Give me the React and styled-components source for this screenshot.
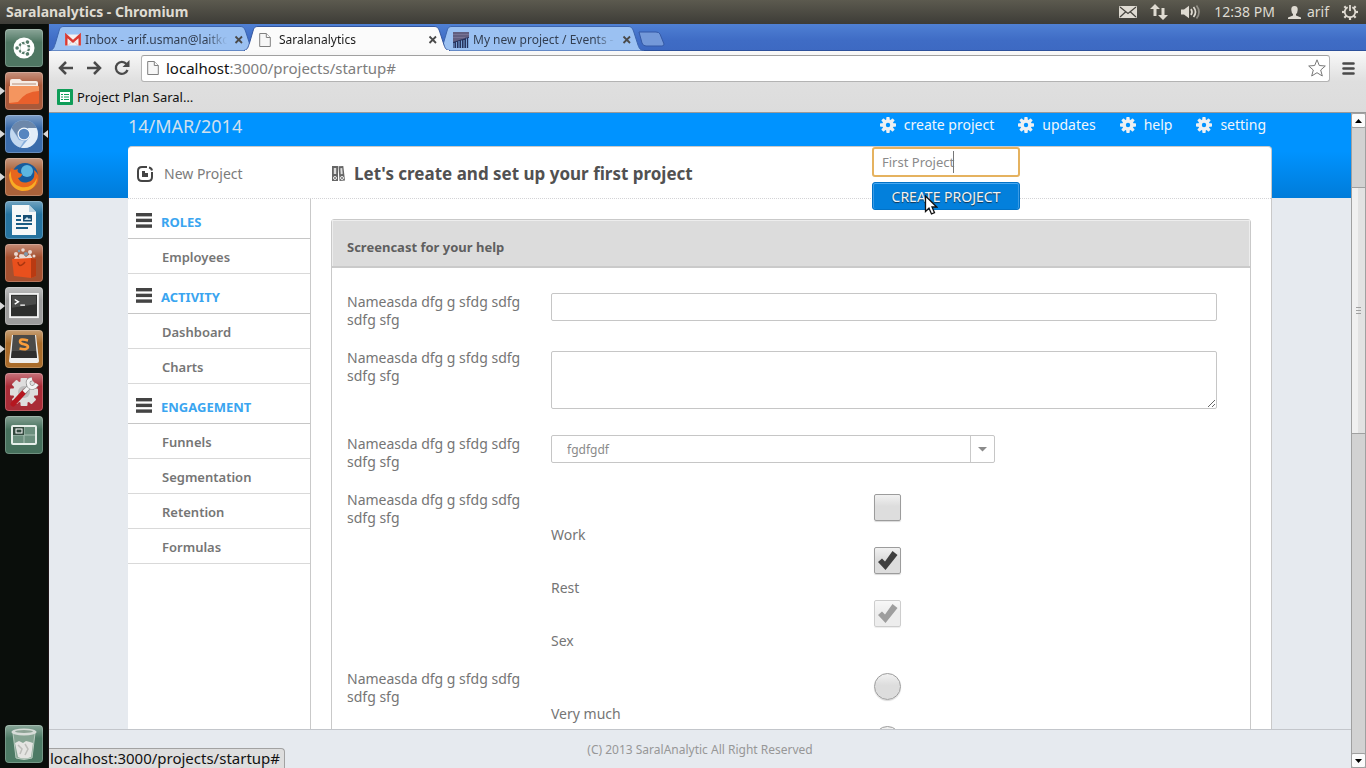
import React from "react";
import styled, { createGlobalStyle, css } from "styled-components";

const chromeFont = '"Noto Sans", "Open Sans", sans-serif';
const pageFont = '"Noto Sans", "Open Sans", sans-serif';

const GlobalStyle = createGlobalStyle`
  *, *::before, *::after { box-sizing: border-box; }
  body { margin: 0; font-family: ${pageFont}; background: #e6eaef; }
  button, input, select, textarea { font-family: inherit; margin: 0; }
  button { border: 0; padding: 0; background: none; }
  ul { list-style: none; margin: 0; padding: 0; }
  h1, h2, h3, p { margin: 0; }
  svg { display: block; flex: none; }
`;

/* ---------- desktop ---------- */

const Desktop = styled.div`
  height: 100vh;
  display: flex;
  flex-direction: column;
  overflow: hidden;
`;

const SystemBar = styled.header`
  flex: none;
  height: 24px;
  padding: 0 8px 0 6px;
  display: flex;
  align-items: center;
  justify-content: space-between;
  background: linear-gradient(#5c5a4f, #3d3c37);
  color: #dfdbd2;
  font: 14px/24px ${chromeFont};
`;

const WindowTitle = styled.h1`
  font-size: 14px;
  font-weight: 700;
`;

const Indicators = styled.div`
  display: flex;
  align-items: center;
  gap: 13px;
`;

const Indicator = styled.span`
  display: flex;
  align-items: center;
  gap: 6px;
`;

const Workspace = styled.div`
  flex: 1;
  min-height: 0;
  display: flex;
`;

const Launcher = styled.nav`
  flex: none;
  width: 49px;
  padding: 5px 5px 5px;
  display: flex;
  flex-direction: column;
  gap: 5px;
  background: #0a0e0b;
  border-right: 1px solid #1f1417;
`;

const Tile = styled.button`
  position: relative;
  flex: none;
  width: 38px;
  height: 38px;
  border-radius: 4px;
  display: grid;
  place-items: center;
  background: linear-gradient(rgba(255, 255, 255, 0.35), rgba(255, 255, 255, 0) 35%), ${(p) => p.$color};
  box-shadow: inset 0 0 0 1px rgba(255, 255, 255, 0.22);
  ${(p) => p.$last && css`margin-top: auto;`}
  ${(p) =>
    p.$running &&
    css`
      &::before {
        content: "";
        position: absolute;
        left: -5px;
        top: 15px;
        border: 4px solid transparent;
        border-left: 5px solid #d8d8d8;
        border-right: 0;
      }
    `}
  ${(p) =>
    p.$active &&
    css`
      &::after {
        content: "";
        position: absolute;
        right: -5px;
        top: 15px;
        border: 4px solid transparent;
        border-right: 5px solid #d8d8d8;
        border-left: 0;
      }
    `}
`;

/* ---------- browser ---------- */

const Browser = styled.div`
  flex: 1;
  min-width: 0;
  display: flex;
  flex-direction: column;
`;

const TabStrip = styled.div`
  flex: none;
  height: 27px;
  padding: 2px 0 0 1px;
  display: flex;
  background: linear-gradient(#4f80d4, #3f6cc5 60%, #3d69c2);
  font: 12px/24px ${chromeFont};
  box-shadow: inset 0 -1px #2c509b;
`;

const Tab = styled.div`
  position: relative;
  z-index: ${(p) => (p.$active ? 2 : 1)};
  width: 206px;
  height: 25px;
  padding: 2px 8px 0 15px;
  display: flex;
  align-items: center;
  gap: 4px;
  color: ${(p) => (p.$active ? "#1b1b1b" : "#333f52")};
  & + & { margin-left: -12px; }
`;

const TabShape = styled.svg`
  position: absolute;
  inset: 0;
  z-index: -1;
`;

const Favicon = styled.span`
  flex: none;
  width: 16px;
`;

const TabLabel = styled.span`
  flex: 1;
  min-width: 0;
  white-space: nowrap;
  mask-image: linear-gradient(to right, #000 84%, transparent 98%);
`;

const TabClose = styled.button`
  flex: none;
  width: 14px;
  height: 10px;
`;

const NewTab = styled.button`
  align-self: center;
  margin-left: -6px;
  z-index: 2;
`;

const Toolbar = styled.div`
  flex: none;
  height: 62px;
  background: linear-gradient(#f9f9f9, #dfdfdf 50%, #dcdcdc);
  border-bottom: 1px solid #999;
`;

const AddressRow = styled.div`
  height: 34px;
  padding: 3px 11px 3px 9px;
  display: flex;
  align-items: center;
  gap: 12px;
`;

const IconButton = styled.button`
  width: 16px;
  height: 16px;
`;

const AddressBox = styled.div`
  flex: 1;
  height: 27px;
  margin-left: -1px;
  padding: 0 3px 0 5px;
  display: flex;
  align-items: center;
  gap: 7px;
  background: #fff;
  border: 1px solid #b3b3b3;
  border-top-color: #a0a0a0;
  border-radius: 3px;
  font: 15px/24px ${chromeFont};
  color: #7d7d7d;
`;

const AddressText = styled.span`
  flex: 1;
  b { font-weight: 400; color: #111; }
`;

const BookmarkRow = styled.div`
  height: 24px;
  padding-left: 8px;
  display: flex;
  align-items: center;
`;

const Bookmark = styled.a`
  display: flex;
  align-items: center;
  gap: 4px;
  color: #111;
  text-decoration: none;
  font: 13px/20px ${chromeFont};
`;

const Viewport = styled.div`
  flex: 1;
  min-height: 0;
  display: flex;
`;

const StatusBubble = styled.div`
  position: absolute;
  left: 49px;
  bottom: 0;
  height: 20px;
  padding: 0 4px 0 1px;
  background: #dedede;
  border: 1px solid #a2a2a2;
  border-width: 1px 1px 0 0;
  border-radius: 0 4px 0 0;
  color: #111;
  font: 15px/19px ${chromeFont};
`;

const ScrollBar = styled.div`
  flex: none;
  width: 15px;
  display: flex;
  flex-direction: column;
  background: #d2d2d2;
  border: 1px solid #a0a0a0;
  border-width: 0 1px;
`;

const ScrollArrow = styled.button`
  flex: none;
  height: 15px;
  display: grid;
  place-items: center;
  background: #fbfbfb;
  border: 1px solid #a0a0a0;
  border-radius: 2px;
  margin: 0 -1px;
`;

const ScrollTrack = styled.div`
  flex: 1;
  padding-top: 59px;
`;

const ScrollThumb = styled.div`
  height: 247px;
  display: grid;
  place-items: center;
  border: 1px solid #a0a0a0;
  border-width: 1px 0;
  background: linear-gradient(to right, #f0f0f0 50%, #e2e2e2 50%);
`;

/* ---------- page ---------- */

const Page = styled.div`
  flex: 1;
  min-width: 0;
  display: flex;
  flex-direction: column;
  background: linear-gradient(#0093ff, #0093ff 45%, #007cd9) top / 100% 85px no-repeat #e6eaef;
`;

const PageScroll = styled.div`
  flex: 1;
  min-height: 0;
  overflow: hidden;
  padding: 0 79px;
`;

const TopLine = styled.div`
  position: relative;
  height: 33px;
  padding-right: 6px;
  display: flex;
  justify-content: space-between;
  line-height: 24px;
`;

const DateText = styled.span`
  padding-top: 1px;
  font-size: 18px;
  color: #cfe0ee;
`;

const TopNav = styled.nav`
  display: flex;
  gap: 24px;
`;

const TopLink = styled.a`
  height: 24px;
  display: flex;
  align-items: center;
  gap: 8px;
  color: #f1f6fb;
  font-size: 14px;
  text-decoration: none;
`;

const CreatePopover = styled.form`
  position: absolute;
  z-index: 3;
  top: 34px;
  right: 252px;
  width: 148px;
  display: flex;
  flex-direction: column;
  gap: 5px;
`;

const ProjectName = styled.input`
  width: 100%;
  height: 30px;
  padding: 0 8px;
  background: #fff;
  border: 2px solid #e5b25f;
  border-radius: 3px;
  outline: 0;
  color: #8a8a8a;
  font-size: 13px;
`;

const Caret = styled.i`
  position: absolute;
  left: 81px;
  top: 4px;
  width: 1px;
  height: 22px;
  background: #777;
`;

const CreateButton = styled.button`
  height: 28px;
  background: #0380dc;
  border: 1px solid #0272c6;
  border-radius: 3px;
  box-shadow: inset 0 1px #49a9f2, inset 1px 0 #3a9be6, inset -1px 0 #3a9be6;
  color: #f3f3f3;
  font-size: 14px;
  text-shadow: 0 1px 1px #15324c;
`;

const Pointer = styled.svg`
  position: absolute;
  left: 52px;
  top: 48px;
`;

const Card = styled.div`
  background: #fff;
  border: 1px solid #c9c9c9;
  border-width: 1px 1px 0 0;
  border-radius: 4px 4px 0 0;
`;

const CardHead = styled.div`
  height: 52px;
  display: flex;
  border-bottom: 1px dotted #d3d3d6;
`;

const HeadLabel = styled.div`
  width: 204px;
  padding: 2px 0 0 9px;
  display: flex;
  align-items: center;
  gap: 11px;
  color: #7b7b7b;
  font-size: 14px;
`;

const HeadTitle = styled.h2`
  padding-top: 2px;
  display: flex;
  align-items: center;
  gap: 9px;
  color: #515151;
  font-size: 17px;
  font-weight: 700;
`;

const CardBody = styled.div`
  display: flex;
  align-items: stretch;
`;

const SideMenu = styled.aside`
  flex: none;
  width: 183px;
  border-right: 1px solid #c9c9c9;
`;

const MenuHeading = styled.h3`
  height: 40px;
  padding: 6px 0 0 8px;
  display: flex;
  align-items: center;
  gap: 9px;
  border-bottom: 1px solid #c6c6c6;
  color: #3aa5f0;
  font-size: 13px;
  svg { margin-bottom: 2px; }
`;

const MenuItem = styled.a`
  height: 35px;
  padding: 2px 0 0 34px;
  display: flex;
  align-items: center;
  border-bottom: 1px solid #d9d9d9;
  color: #757575;
  font-size: 13px;
  font-weight: 600;
  text-decoration: none;
`;

const Panel = styled.section`
  flex: 1;
  min-width: 0;
  margin: 20px 20px 0;
  border: 1px solid #c9c9c9;
  border-radius: 3px 3px 0 0;
`;

const PanelHead = styled.h3`
  height: 48px;
  padding: 8px 15px 0;
  display: flex;
  align-items: center;
  background: #dcdcdc;
  border-bottom: 2px solid #cacaca;
  box-shadow: inset 1px 1px #ededed, inset -1px 0 #ededed;
  color: #5f5f5f;
  font-size: 13px;
`;

const PanelForm = styled.form`
  padding: 25px 33px 0 15px;
`;

const Row = styled.div`
  padding-bottom: 20px;
  display: flex;
  gap: 20px;
  color: #757575;
  font-size: 14px;
  line-height: 18px;
`;

const RowLabel = styled.label`
  flex: none;
  width: 184px;
`;

const Control = styled.div`
  flex: 1;
  min-width: 0;
`;

const fieldFrame = css`
  display: block;
  width: 100%;
  background: #fff;
  border: 1px solid #c6c6c6;
  border-radius: 2px;
  color: #757575;
  font-size: 14px;
  outline: 0;
`;

const TextInput = styled.input`
  ${fieldFrame}
  height: 28px;
`;

const TextArea = styled.textarea`
  ${fieldFrame}
  height: 58px;
  margin: 2px 0 6px;
  resize: vertical;
`;

const SelectBox = styled.div`
  position: relative;
  max-width: 444px;
`;

const Select = styled.select`
  ${fieldFrame}
  height: 28px;
  padding: 0 30px 0 15px;
  appearance: none;
  color: #8a8a8a;
  font-size: 12px;
`;

const SelectArrow = styled.span`
  position: absolute;
  right: 1px;
  top: 1px;
  bottom: 1px;
  width: 24px;
  display: grid;
  place-items: center;
  border-left: 1px solid #c9c9c9;
  pointer-events: none;
`;

const Option = styled.label`
  height: 53px;
  display: flex;
  flex-direction: column;
  justify-content: space-between;
`;

const Mark = styled.span`
  align-self: center;
  width: 27px;
  height: 30px;
  margin-left: 6px;
  padding-top: 3px;
  display: grid;
  opacity: ${(p) => (p.$dim ? 0.5 : 1)};
  > * { grid-area: 1 / 1; }
  > svg { pointer-events: none; }
`;

const Tick = styled.input`
  appearance: none;
  width: 27px;
  height: 27px;
  background: linear-gradient(#f1f1f1, #dddddd 45%);
  border: 1px solid #9c9c9c;
  border-radius: ${(p) => (p.type === "radio" ? "50%" : "2px")};
  box-shadow: 0 1px 1px rgba(0, 0, 0, 0.15);
`;

const Footer = styled.footer`
  flex: none;
  height: 39px;
  border-top: 1px solid #c3c6cb;
  background: #e6eaef;
  color: #979797;
  text-align: center;
  font-size: 12px;
  line-height: 40px;
`;

/* ---------- drawings ---------- */

const Gear = () => (
  <svg width="16" height="16" viewBox="-8 -8 16 16" fill="#eef0f2">
    {[0, 45, 90, 135].map((a) => (
      <rect key={a} x="-1.7" y="-8" width="3.4" height="16" rx="0.8" transform={`rotate(${a})`} />
    ))}
    <circle r="5.7" />
    <circle r="2.2" fill="#0093ff" />
  </svg>
);

const Bars = () => (
  <svg width="16" height="15" viewBox="0 0 16 15" fill="#444">
    <rect y="0" width="16" height="3.4" /><rect y="5.7" width="16" height="3.4" /><rect y="11.4" width="16" height="3.4" />
  </svg>
);

const DocIcon = () => (
  <svg width="12" height="16" viewBox="0 0 12 16" fill="#f7f7f7" stroke="#808080">
    <path d="M.7 1.5h6.6l4 4v9H.7z" /><path d="M7.3 1.5v4h4" />
  </svg>
);

const GmailIcon = () => (
  <svg width="16" height="16" viewBox="0 0 16 16">
    <rect y="2.5" width="16" height="11" rx="1" fill="#f4f0f0" />
    <path d="M3 13.5 8 8.5l5 5" fill="none" stroke="#d9c7c7" />
    <path d="M1.3 13.5v-10L8 9.5l6.7-6v10" fill="none" stroke="#d93a33" strokeWidth="2.4" />
  </svg>
);

const ChartIcon = () => (
  <svg width="16" height="16" viewBox="0 0 16 16">
    <rect width="16" height="16" fill="#27345e" /><path d="M0 0h16v5L0 10z" fill="#625f80" />
    <path d="M0 2.5h16M0 5.5h12" stroke="#777293" />
    <path d="M1 16v-5M3.5 16v-6M6 16v-7M8.5 16V8.500M11 16V8M13.500 16V6.500M15.500 16V6" stroke="#7aa2d8" />
  </svg>
);

const TabBack = ({ active }) => (
  <TabShape width="206" height="25" viewBox="0 0 206 25">
    <path
      d="M0 24.500C4 23.500 4 21 5.500 17L9 5C10 1.500 11 .500 14 .500H190C193 .500 194 1.500 195.500 5L200 19C201.500 23 202 24 206 24.500"
      fill={active ? "#fbfbfb" : "#9bc1f2"}
      stroke={active ? "#35579f" : "#3c65ae"}
    />
    {active && <path d="M1 24.500H205" stroke="#f9f9f9" />}
  </TabShape>
);

const CloseX = () => (
  <svg width="10" height="10" viewBox="0 0 10 10" stroke="#4a4a4a" strokeWidth="1.800">
    <path d="M1.500 1.500 8 8M8 1.500 1.500 8" />
  </svg>
);

const FolderArt = () => (
  <svg width="32" height="28" viewBox="0 0 32 28">
    <path d="M2 4q0-2 2-2h8l2 2h14q2 0 2 2v6H2z" fill="#f6ece6" />
    <path d="M4 7h24" stroke="#b98e78" />
    <rect x="1" y="9" width="30" height="18" rx="1.500" fill="#e9602c" />
    <path d="M1 10q0-1 1-1h28q1 0 1 1v4Q18 14 10 25L1 26z" fill="#f4955f" />
  </svg>
);

const ChromiumArt = () => (
  <svg width="30" height="30" viewBox="-15 -15 30 30">
    <circle r="14" fill="#87aedb" />
    <path d="M-12.500-6A14 14 0 0 1 12.500-6H0L-6 3z" fill="#6c87aa" />
    <path d="M-12.500-6-5 6 0 7-4 13.400A14 14 0 0 1-12.500-6z" fill="#c3d8ef" />
    <path d="M12.500-6A14 14 0 0 1-3 13.700L6 3 4-6z" fill="#e2edf8" />
    <circle r="6.500" fill="#f2f6fb" /><circle r="5.300" fill="#5585c0" />
  </svg>
);

const FirefoxArt = () => (
  <svg width="32" height="32" viewBox="-16 -16 32 32">
    <circle cx="1" cy="-1" r="13" fill="#175b9c" />
    <circle cx="3" cy="-6" r="6" fill="#5cb5e0" />
    <path d="M-13-9Q-10-6-6-8-8-4-2-3-2 0-6 1-3 7 4 5 12 3 10-7 17-2 13 7 7 15-2 14-16 11-15-3z" fill="#e8661d" />
    <path d="M-13-6Q-14 7-3 10 8 12 13 1 12 14-2 14-14 12-15-2z" fill="#f7ad26" />
  </svg>
);

const WriterArt = () => (
  <svg width="26" height="32" viewBox="0 0 26 32">
    <path d="M1 1h17l7 7v23H1z" fill="#f7f8f8" /><path d="M18 1v7h7z" fill="#b9d4e4" />
    <path d="M5 12h5M5 16h5M5 20h16M5 24h12" stroke="#1b5d84" strokeWidth="2" />
    <rect x="12" y="11" width="9" height="6.500" fill="#174e73" /><path d="M13 16l3-3 2 2 1-1 1 2z" fill="#cde1ec" />
  </svg>
);

const BagArt = () => (
  <svg width="28" height="32" viewBox="0 0 28 32">
    <g fill="#ead9d2"><circle cx="6" cy="7" r="2" /><circle cx="13" cy="3" r="1.800" /><circle cx="20" cy="5" r="2" /><circle cx="24" cy="9" r="1.500" /><circle cx="11" cy="9" r="2" /><path d="M4 12l2-3 3 2 4-4 3 3 4-3 3 5z" /></g>
    <circle cx="16" cy="7" r="2" fill="#7e9aae" /><circle cx="9" cy="4" r="1.200" fill="#7e9aae" />
    <path d="M2 12 21 11 26 12V29L21 31 4 29z" fill="#e9501d" /><path d="M21 11l5 1v17l-5 2z" fill="#b93a12" />
    <path d="M8 15q1 7 7 0" fill="none" stroke="#a8350f" strokeWidth="1.500" />
  </svg>
);

const TerminalArt = () => (
  <svg width="30" height="26" viewBox="0 0 32 28">
    <rect x="1" y="1" width="30" height="25" fill="#2d2e2d" stroke="#f3f3f3" strokeWidth="2" />
    <path d="M3 3h26v9L3 16z" fill="#4a4b4a" />
    <path d="M6 7l4 2.500L6 12M12 13h5" stroke="#fff" strokeWidth="1.500" fill="none" />
  </svg>
);

const SublimeArt = () => (
  <svg width="32" height="30" viewBox="0 0 32 30">
    <path d="M4 1h24l3 26q0 2-2 2H3q-2 0-2-2z" fill="#eee" />
    <path d="M5 1h22l2 23H3z" fill="#4b4a48" /><path d="M4 17h24l1 7H3z" fill="#2f2e2d" />
    <path d="M20 6.500Q12 4 12 7.500C12 11.500 20 9 20 13Q19.500 16.500 11.500 14.500" fill="none" stroke="#fa9d3a" strokeWidth="2.600" />
  </svg>
);

const ToolsArt = () => (
  <svg width="30" height="30" viewBox="-15 -15 30 30">
    <g fill="#dedede">{[0, 45, 90, 135].map((a) => <rect key={a} x="-3.500" y="-14" width="7" height="28" rx="1" transform={`rotate(${a})`} />)}<circle r="11" /></g>
    <circle r="6" fill="#bdbdbd" />
    <path d="M-11 12 1-1" stroke="#b5161f" strokeWidth="5" strokeLinecap="round" />
    <path d="M0 0 7-7" stroke="#8f8f8f" strokeWidth="5" /><path d="M0 0 7-7" stroke="#f4f4f4" strokeWidth="3.500" />
    <path d="M8-13Q2-12 5-6 9-2 13-8" fill="none" stroke="#8f8f8f" strokeWidth="4.500" />
    <path d="M8-13Q2-12 5-6 9-2 13-8" fill="none" stroke="#f4f4f4" strokeWidth="3.200" />
  </svg>
);

const SpacesArt = () => (
  <svg width="26" height="20" viewBox="0 0 26 20" fill="none">
    <rect x="1" y="1" width="24" height="18" rx="1" stroke="#e6eee9" strokeWidth="2" fill="#6c8f7e" />
    <path d="M13 2v16M2 10h22" stroke="#a8bfb3" /><rect x="2" y="2" width="11" height="8" fill="#33493e" />
    <rect x="5" y="4" width="6" height="4" stroke="#fff" />
  </svg>
);

const UbuntuArt = () => (
  <svg width="24" height="24" viewBox="-12 -12 24 24">
    <circle r="10.500" fill="#fff" /><circle r="5" fill="none" stroke="#547b69" strokeWidth="2.400" />
    {[0, 120, 240].map((a) => (
      <g key={a} transform={`rotate(${a})`}><circle cx="-6.700" r="2.900" fill="#fff" /><circle cx="-6.900" r="1.800" fill="#547b69" /><path d="M3 0h5" stroke="#fff" strokeWidth="1.200" /></g>
    ))}
  </svg>
);

const TrashArt = () => (
  <svg width="28" height="34" viewBox="0 0 28 34">
    <path d="M3 6h22l-3 25q-8 3-16 0z" fill="#86a493" stroke="#b9cbc0" />
    <path d="M5 16l4-2 4 2 3-2 4 1 3 1-2 14q-7 3-13 0z" fill="#e4e4e2" />
    <path d="M8 18l4 4-2 5M15 17l3 5-3 6" fill="none" stroke="#bdbdba" strokeWidth="1.500" />
    <ellipse cx="14" cy="5" rx="12.500" ry="3.500" fill="#d7dcd8" /><ellipse cx="14" cy="4.500" rx="9" ry="1.500" fill="#8da395" />
  </svg>
);

/* ---------- data ---------- */

const launcherItems = [
  { name: "Dash", color: "#4f7763", art: <UbuntuArt /> },
  { name: "Files", color: "#a9593a", art: <FolderArt />, running: true },
  { name: "Chromium", color: "#3a6cab", art: <ChromiumArt />, running: true, active: true },
  { name: "Firefox", color: "#a9623a", art: <FirefoxArt />, running: true },
  { name: "Writer", color: "#26739f", art: <WriterArt /> },
  { name: "Software", color: "#a5502f", art: <BagArt /> },
  { name: "Terminal", color: "#9c9c9c", art: <TerminalArt />, running: true },
  { name: "Sublime", color: "#a96c2b", art: <SublimeArt />, running: true },
  { name: "Settings", color: "#a92c37", art: <ToolsArt /> },
  { name: "Workspaces", color: "#46705c", art: <SpacesArt /> },
  { name: "Trash", color: "#4d7a65", art: <TrashArt />, last: true },
];

const tabs = [
  { label: "Inbox - arif.usman@laitkor", icon: <GmailIcon /> },
  { label: "Saralanalytics", icon: <DocIcon />, active: true },
  { label: "My new project / Events -", icon: <ChartIcon /> },
];

const menu = [
  { title: "ROLES", items: ["Employees"] },
  { title: "ACTIVITY", items: ["Dashboard", "Charts"] },
  { title: "ENGAGEMENT", items: ["Funnels", "Segmentation", "Retention", "Formulas"] },
];

const links = ["create project", "updates", "help", "setting"];
const rowText = "Nameasda dfg g sfdg sdfg sdfg sfg";

function OptionMark({ type, name, label, checked, disabled }) {
  return (
    <Option>
      <Mark $dim={disabled}>
        <Tick type={type} name={name} defaultChecked={checked} disabled={disabled} />
        {checked && (
          <svg width="27" height="27" viewBox="0 0 27 27">
            <path d="M4 15 8 11.500 11 14.500 18.500 4 23.500 8 11.500 23z" fill="#3f3f3f" />
          </svg>
        )}
      </Mark>
      <span>{label}</span>
    </Option>
  );
}

function SystemStatus() {
  return (
    <Indicators>
      <svg width="18" height="12" viewBox="0 0 18 12"><rect width="18" height="12" rx="1" fill="#dfdbd2" /><path d="M1 1l8 6.500L17 1M1 11l5.500-5M17 11l-5.500-5" stroke="#46443e" fill="none" strokeWidth="1.200" /></svg>
      <svg width="18" height="16" viewBox="0 0 18 16" fill="#dfdbd2"><path d="M5 0 0 5h3.500v7h3V5H10zM13 16l5-5h-3.500V4h-3v7H8z" /></svg>
      <svg width="20" height="14" viewBox="0 0 20 14" fill="#dfdbd2"><path d="M0 4.500h3L8 .800v12.500L3 9.500H0z" /><g fill="none" stroke="#dfdbd2" strokeWidth="1.700"><path d="M10 4q2 3 0 6" /><path d="M12.500 2q4 5 0 10" /><path d="M15.500 .500q5 6.500 0 13" opacity=".45" /></g></svg>
      <span>12:38 PM</span>
      <Indicator>
        <svg width="13" height="13" viewBox="0 0 13 13" fill="#dfdbd2"><path d="M6.500 0Q10 0 9.700 4 9.500 7 8 8v1.500l5 2V13H0v-1.500l5-2V8Q3.500 7 3.300 4 3 0 6.500 0z" /></svg>
        arif
      </Indicator>
      <svg width="16" height="16" viewBox="-8 -8 16 16" fill="none" stroke="#dfdbd2">
        {[45, 90, 135, 180, 225, 270, 315].map((a) => <path key={a} d="M0-5v-3" strokeWidth="2.200" transform={`rotate(${a})`} />)}
        <path d="M-2.300-4.800A5.300 5.300 0 1 0 2.300-4.800" strokeWidth="1.800" /><path d="M0-7v6" strokeWidth="1.800" />
      </svg>
    </Indicators>
  );
}

export default function App() {
  return (
    <Desktop>
      <GlobalStyle />
      <SystemBar>
        <WindowTitle>Saralanalytics - Chromium</WindowTitle>
        <SystemStatus />
      </SystemBar>
      <Workspace>
        <Launcher>
          {launcherItems.map((i) => (
            <Tile key={i.name} aria-label={i.name} $color={i.color} $running={i.running} $active={i.active} $last={i.last}>
              {i.art}
            </Tile>
          ))}
        </Launcher>
        <Browser>
          <TabStrip>
            {tabs.map((t) => (
              <Tab key={t.label} $active={t.active}>
                <TabBack active={t.active} />
                <Favicon>{t.icon}</Favicon>
                <TabLabel>{t.label}</TabLabel>
                <TabClose aria-label="Close tab"><CloseX /></TabClose>
              </Tab>
            ))}
            <NewTab aria-label="New tab">
              <svg width="27" height="16" viewBox="0 0 27 16"><path d="M1 1h17q3 0 4 2l4 10q0 2-2 2H8q-3 0-4-3z" fill="#7499d9" stroke="#3459a5" /></svg>
            </NewTab>
          </TabStrip>
          <Toolbar>
            <AddressRow>
              <IconButton aria-label="Back"><svg width="16" height="16" viewBox="0 0 16 16" fill="none" stroke="#4a4a4a" strokeWidth="2.500"><path d="M15 8H2M8 2 2 8l6 6" /></svg></IconButton>
              <IconButton aria-label="Forward"><svg width="16" height="16" viewBox="0 0 16 16" fill="none" stroke="#4a4a4a" strokeWidth="2.500"><path d="M1 8h13M8 2l6 6-6 6" /></svg></IconButton>
              <IconButton aria-label="Reload"><svg width="16" height="16" viewBox="0 0 16 16" fill="none" stroke="#4a4a4a" strokeWidth="2.300"><path d="M12.500 4A6 6 0 1 0 13.500 10" /><path d="M15.500 0v7h-7z" fill="#4a4a4a" stroke="none" /></svg></IconButton>
              <AddressBox>
                <DocIcon />
                <AddressText><b>localhost</b>:3000/projects/startup#</AddressText>
                <svg width="18" height="18" viewBox="0 0 18 18" fill="#fff" stroke="#777" strokeLinejoin="round"><path d="M9 .800 11.300 6.500 17.300 7 12.700 11 14.300 17 9 13.700 3.700 17 5.300 11 .700 7 6.700 6.500z" /></svg>
              </AddressBox>
              <svg width="13" height="13" viewBox="0 0 13 13" stroke="#4a4a4a" strokeWidth="2.600" strokeLinecap="round"><path d="M1.500 1.500h10M1.500 6.500h10M1.500 11.500h10" /></svg>
            </AddressRow>
            <BookmarkRow>
              <Bookmark href="#">
                <svg width="16" height="16" viewBox="0 0 16 16"><rect width="16" height="16" rx="1" fill="#0f9d58" /><rect x="3" y="3" width="10" height="10" fill="#fff" /><path d="M4 5.500h8M4 8h8M4 10.500h8" stroke="#0f9d58" strokeWidth="1.200" /><path d="M6.500 3v10" stroke="#fff" /></svg>
                Project Plan Saral…
              </Bookmark>
            </BookmarkRow>
          </Toolbar>
          <Viewport>
            <Page>
              <PageScroll>
                <TopLine>
                  <DateText>14/MAR/2014</DateText>
                  <TopNav>
                    {links.map((l) => <TopLink key={l} href="#"><Gear />{l}</TopLink>)}
                  </TopNav>
                  <CreatePopover>
                    <ProjectName aria-label="Project name" defaultValue="First Project" />
                    <Caret />
                    <CreateButton type="button">CREATE PROJECT</CreateButton>
                    <Pointer width="14" height="20" viewBox="0 0 14 20">
                      <path d="M1.500 1v15.500L5 13.200 7.500 19l3-1.300L8 12h4.700z" fill="#fff" stroke="#111" strokeWidth="1.300" />
                    </Pointer>
                  </CreatePopover>
                </TopLine>
                <Card>
                  <CardHead>
                    <HeadLabel>
                      <svg width="16" height="16" viewBox="0 0 16 16" fill="none" stroke="#444" strokeWidth="2"><path d="M10 1H5Q1 1 1 5v6q0 4 4 4h6q4 0 4-4V6" /><path d="M12 1.500q2.500.500 3 3" /><path d="M5 5h3v2h3v4H5z" fill="#444" stroke="none" /></svg>
                      New Project
                    </HeadLabel>
                    <HeadTitle>
                      <svg width="13" height="15" viewBox="0 0 13 15" fill="#666"><path d="M0 0h6v15H0zM6.500 .300 11.300 0 13 14.500 7.500 15z" /><g fill="#ddd"><rect x="1.800" y="2" width="2.400" height="6" /><path d="M8.300 2.200l1.900-.200.500 6-2 .200z" /></g><g fill="none" stroke="#fff" strokeWidth=".9"><circle cx="3" cy="12" r="1.500" /><circle cx="10" cy="12" r="1.500" /></g></svg>
                      Let's create and set up your first project
                    </HeadTitle>
                  </CardHead>
                  <CardBody>
                    <SideMenu>
                      {menu.map((g) => (
                        <React.Fragment key={g.title}>
                          <MenuHeading><Bars />{g.title}</MenuHeading>
                          <ul>{g.items.map((i) => <li key={i}><MenuItem href="#">{i}</MenuItem></li>)}</ul>
                        </React.Fragment>
                      ))}
                    </SideMenu>
                    <Panel>
                      <PanelHead>Screencast for your help</PanelHead>
                      <PanelForm>
                        <Row>
                          <RowLabel htmlFor="line">{rowText}</RowLabel>
                          <Control><TextInput id="line" type="text" /></Control>
                        </Row>
                        <Row>
                          <RowLabel htmlFor="area">{rowText}</RowLabel>
                          <Control><TextArea id="area" /></Control>
                        </Row>
                        <Row>
                          <RowLabel htmlFor="pick">{rowText}</RowLabel>
                          <Control>
                            <SelectBox>
                              <Select id="pick"><option>fgdfgdf</option></Select>
                              <SelectArrow>
                                <svg width="9" height="5" viewBox="0 0 9 5" fill="#8b8b8b"><path d="M0 0h9L4.500 4.500z" /></svg>
                              </SelectArrow>
                            </SelectBox>
                          </Control>
                        </Row>
                        <Row>
                          <RowLabel as="span">{rowText}</RowLabel>
                          <Control>
                            <OptionMark type="checkbox" label="Work" />
                            <OptionMark type="checkbox" label="Rest" checked />
                            <OptionMark type="checkbox" label="Sex" checked disabled />
                          </Control>
                        </Row>
                        <Row>
                          <RowLabel as="span">{rowText}</RowLabel>
                          <Control>
                            <OptionMark type="radio" name="amount" label="Very much" />
                            <OptionMark type="radio" name="amount" label="" />
                          </Control>
                        </Row>
                      </PanelForm>
                    </Panel>
                  </CardBody>
                </Card>
              </PageScroll>
              <Footer>(C) 2013 SaralAnalytic All Right Reserved</Footer>
            </Page>
            <ScrollBar>
              <ScrollArrow aria-label="Scroll up"><svg width="7" height="4" viewBox="0 0 7 4"><path d="M0 4 3.500 0 7 4z" /></svg></ScrollArrow>
              <ScrollTrack>
                <ScrollThumb>
                  <svg width="5" height="7" viewBox="0 0 5 7" stroke="#a0a0a0"><path d="M0 .500h5M0 3.500h5M0 6.500h5" /></svg>
                </ScrollThumb>
              </ScrollTrack>
              <ScrollArrow aria-label="Scroll down"><svg width="7" height="4" viewBox="0 0 7 4"><path d="M0 0 3.500 4 7 0z" /></svg></ScrollArrow>
            </ScrollBar>
          </Viewport>
        </Browser>
      </Workspace>
      <StatusBubble>localhost:3000/projects/startup#</StatusBubble>
    </Desktop>
  );
}
